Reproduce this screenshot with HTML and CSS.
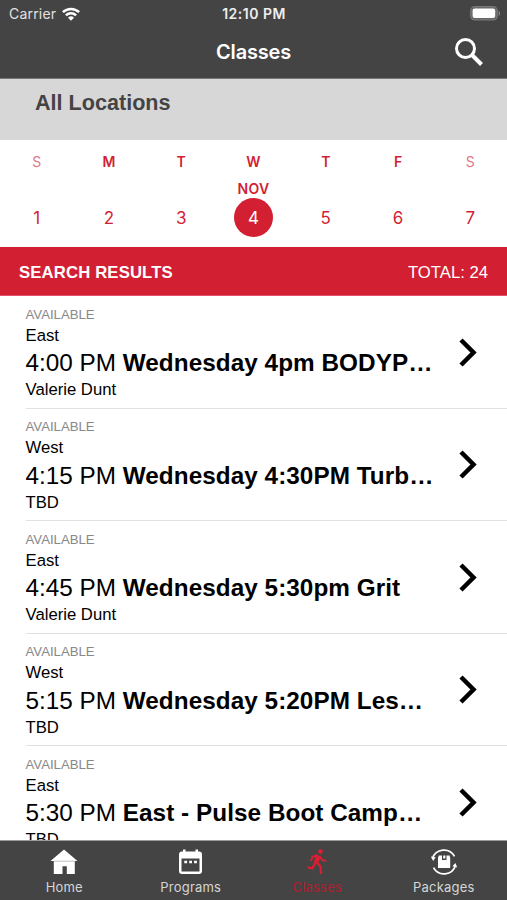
FILE: index.html
```html
<!DOCTYPE html>
<html lang="en">
<head>
  <meta charset="UTF-8" />
  <meta name="viewport" content="width=device-width, initial-scale=1.0"/>
  <title>Classes</title>
  <link rel="stylesheet" href="styles.css">
</head>
<body>

  <div class="app">
    <header class="header">
      <div class="status-bar">
        <div class="carrier">
          <span>Carrier</span>
          <svg class="wifi" viewBox="0 0 18 14" fill="none" stroke="#fff" stroke-width="2.5">
            <path d="M0.9 5.2a11.6 11.6 0 0 1 16.2 0"/>
            <path d="M3.9 8.4a7.3 7.3 0 0 1 10.2 0"/>
            <path d="M9 13.8L6 10.8a4.3 4.3 0 0 1 6 0z" fill="#fff" stroke="none"/>
          </svg>
        </div>
        <span class="clock">12:10 PM</span>
        <svg class="battery" viewBox="0 0 31 15">
          <rect x="0.7" y="0.7" width="26.6" height="13.2" rx="4" fill="#666" stroke="#777" stroke-width="1.2"/>
          <rect x="2.6" y="2.6" width="22.6" height="9.4" rx="2" fill="#fff"/>
          <path d="M28.7 5v4.800c1.800-.6 1.800-4.200 0-4.800z" fill="#8b8b8b"/>
        </svg>
      </div>
      <div class="title-bar">
        <h1>Classes</h1>
        <svg class="search" viewBox="0 0 28 28" fill="none" stroke="#fff">
          <circle cx="10.500" cy="10.500" r="9" stroke-width="3"/>
          <path d="M17 17l9.500 9.500" stroke-width="4"/>
        </svg>
      </div>
    </header>

    <div class="location">All Locations</div>

    <!-- Week picker -->
    <div class="week">
      <div class="day weekend"><span class="name">S</span><span class="month"></span><span class="date">1</span></div>
      <div class="day"><span class="name">M</span><span class="month"></span><span class="date">2</span></div>
      <div class="day"><span class="name">T</span><span class="month"></span><span class="date">3</span></div>
      <div class="day selected"><span class="name">W</span><span class="month">NOV</span><span class="date">4</span></div>
      <div class="day"><span class="name">T</span><span class="month"></span><span class="date">5</span></div>
      <div class="day"><span class="name">F</span><span class="month"></span><span class="date">6</span></div>
      <div class="day weekend"><span class="name">S</span><span class="month"></span><span class="date">7</span></div>
    </div>

    <div class="results-bar">
      <span class="results-title">SEARCH RESULTS</span>
      <span>TOTAL: 24</span>
    </div>

    <div class="class-list">
      <div class="class-row">
        <div class="class-info">
          <p class="status">AVAILABLE</p>
          <p class="place">East</p>
          <p class="time">4:00 PM <b>Wednesday 4pm BODYP…</b></p>
          <p class="teacher">Valerie Dunt</p>
        </div>
        <svg class="chevron" viewBox="0 0 18 30"><path d="M2 2l12.500 12.500L2 27"/></svg>
      </div>
      <div class="class-row">
        <div class="class-info">
          <p class="status">AVAILABLE</p>
          <p class="place">West</p>
          <p class="time">4:15 PM <b>Wednesday 4:30PM Turb…</b></p>
          <p class="teacher">TBD</p>
        </div>
        <svg class="chevron" viewBox="0 0 18 30"><path d="M2 2l12.500 12.500L2 27"/></svg>
      </div>
      <div class="class-row">
        <div class="class-info">
          <p class="status">AVAILABLE</p>
          <p class="place">East</p>
          <p class="time">4:45 PM <b>Wednesday 5:30pm Grit</b></p>
          <p class="teacher">Valerie Dunt</p>
        </div>
        <svg class="chevron" viewBox="0 0 18 30"><path d="M2 2l12.500 12.500L2 27"/></svg>
      </div>
      <div class="class-row">
        <div class="class-info">
          <p class="status">AVAILABLE</p>
          <p class="place">West</p>
          <p class="time">5:15 PM <b>Wednesday 5:20PM Les…</b></p>
          <p class="teacher">TBD</p>
        </div>
        <svg class="chevron" viewBox="0 0 18 30"><path d="M2 2l12.500 12.500L2 27"/></svg>
      </div>
      <div class="class-row">
        <div class="class-info">
          <p class="status">AVAILABLE</p>
          <p class="place">East</p>
          <p class="time">5:30 PM <b>East - Pulse Boot Camp…</b></p>
          <p class="teacher">TBD</p>
        </div>
        <svg class="chevron" viewBox="0 0 18 30"><path d="M2 2l12.500 12.500L2 27"/></svg>
      </div>
    </div>

    <nav class="tab-bar">
      <div class="tab">
        <svg viewBox="0 0 28 28" fill="#fff">
          <path d="M14 1.500L27.500 13H24.800V26H16.800V18.200H12.500V26H3.800V13H0.500z"/>
          <path d="M3.800 13.200H24.800" stroke="#999" stroke-width="0.600"/>
        </svg>
        <span>Home</span>
      </div>
      <div class="tab">
        <svg viewBox="0 0 28 28">
          <path d="M5 3.500H6V1.500H8.500V3.500H18.500V1.500H21V3.500H22A3 3 0 0 1 25 6.500V23A3 3 0 0 1 22 26H5A3 3 0 0 1 2 23V6.500A3 3 0 0 1 5 3.500z" fill="#fff"/>
          <rect x="4.500" y="10.500" width="18" height="13" fill="#444"/>
          <path d="M7.300 14h2.800M12.200 14h2.800M17.100 14h2.800" stroke="#fff" stroke-width="2.600"/>
        </svg>
        <span>Programs</span>
      </div>
      <div class="tab active">
        <svg viewBox="0 0 28 28" fill="none" stroke="#dc1e32" stroke-linejoin="round">
          <circle cx="17.500" cy="3.600" r="2.300" fill="#dc1e32" stroke="none"/>
          <path d="M15.300 7.500L13 15" stroke-width="4.600"/>
          <path d="M14.500 7L9.300 9L8 13M16.500 8L19.300 12.300L23.300 12.800" stroke-width="2"/>
          <path d="M13.500 14.500L17.500 18.300L18 26M12 15L9.500 20.300L4.500 19.300" stroke-width="2.300"/>
        </svg>
        <span>Classes</span>
      </div>
      <div class="tab">
        <svg viewBox="0 0 28 28" fill="none" stroke="#fff" stroke-width="1.700">
          <path d="M2.500 10.500A12 12 0 0 1 24.500 8.300M25.500 17.500A12 12 0 0 1 3.500 19.700"/>
          <path d="M0.800 8.500L5.600 9.200L3.200 13zM27.200 19.500L22.400 18.200L25.400 15z" fill="#fff" stroke="none"/>
          <path d="M8.800 7.500H12v4.500h4.500V7.500H19.500l.7 2.500V20H8V10z" fill="#fff" stroke="none"/>
          <path d="M13.200 7.500h2.200v3h-2.200z" fill="#fff" stroke="none"/>
        </svg>
        <span>Packages</span>
      </div>
    </nav>
  </div>

</body>
</html>
```
FILE: styles.css
```css
* {
  margin: 0;
  padding: 0;
  box-sizing: border-box;
}

body {
  font-family: "Liberation Sans", Arial, sans-serif;
  background-color: #fff;
  color: #000;
}

.app {
  display: flex;
  flex-direction: column;
  height: 900px;
  overflow: hidden;
}

.header {
  height: 79px;
  flex: none;
  background-color: #444;
  border-bottom: 1px solid #777;
  color: #fff;
  font-family: Inter, sans-serif;
}

.status-bar {
  display: grid;
  grid-template-columns: 1fr auto 1fr;
  align-items: center;
  height: 27px;
  padding: 0 6px 0 9px;
}

.carrier {
  display: flex;
  align-items: center;
  gap: 6px;
  font-size: 14px;
  letter-spacing: 0.2px;
  color: #e2e2e2;
}

.wifi {
  width: 18px;
  height: 14px;
}

.clock {
  font-size: 14px;
  font-weight: 600;
  letter-spacing: 0.5px;
  margin-right: 2px;
  color: #eee;
}

.battery {
  width: 31px;
  height: 15px;
  justify-self: end;
}

.title-bar {
  display: grid;
  grid-template-columns: 1fr auto 1fr;
  align-items: center;
  height: 50px;
  padding: 0 24px;
}

.title-bar h1 {
  grid-column: 2;
  font-size: 20px;
  font-weight: 600;
  letter-spacing: -0.2px;
}

.search {
  width: 28px;
  height: 28px;
  justify-self: end;
}

.location {
  height: 61px;
  flex: none;
  padding: 12px 35px;
  background-color: #d7d7d7;
  color: #444;
  font-size: 21.6px;
  font-weight: bold;
  line-height: 23px;
}

.week {
  display: grid;
  grid-template-columns: repeat(7, 1fr);
  height: 107px;
  flex: none;
  padding: 12px 0.5px 0;
  font-family: Inter, sans-serif;
  color: #d31f35;
}

.day {
  display: flex;
  flex-direction: column;
  align-items: center;
}

.name {
  height: 20px;
  font-size: 14px;
  line-height: 20px;
  font-weight: 600;
}

.weekend .name {
  font-weight: 400;
  color: #e0788a;
}

.month {
  height: 18px;
  margin-top: 8px;
  font-size: 14px;
  font-weight: 600;
  line-height: 18px;
  letter-spacing: 0.3px;
}

.date {
  width: 39px;
  height: 39px;
  border-radius: 50%;
  font-size: 17px;
  line-height: 41px;
  text-align: center;
}

.selected .date {
  background-color: #d31f32;
  color: #fff;
}

.results-bar {
  display: flex;
  justify-content: space-between;
  align-items: center;
  height: 49px;
  flex: none;
  padding: 3px 19px 0;
  background-color: #d31f32;
  border-bottom: 1px solid #e0506a;
  color: #fff;
  font-size: 16.7px;
}

.results-title {
  font-weight: bold;
  letter-spacing: 0.15px;
}

.class-list {
  flex: 1;
  min-height: 0;
  overflow: hidden;
}

.class-row {
  display: flex;
  justify-content: space-between;
  height: 112.4px;
  margin-left: 25.5px;
  padding-top: 9.6px;
  border-bottom: 1px solid #e2e2e2;
}

.class-row:first-child {
  height: 112.8px;
}

.class-info {
  white-space: nowrap;
}

.status {
  font-size: 13.2px;
  line-height: 18px;
  color: #888;
}

.place {
  font-size: 16.7px;
  line-height: 23.6px;
}

.time {
  font-size: 24.3px;
  line-height: 31px;
}

.time b {
  letter-spacing: 0.05px;
}

.teacher {
  font-size: 16.7px;
  line-height: 23px;
}

.chevron {
  width: 18px;
  height: 30px;
  margin: 32px 30.5px 0 0;
  fill: none;
  stroke: #000;
  stroke-width: 4.5;
}

.tab-bar {
  display: grid;
  grid-template-columns: repeat(4, 1fr);
  height: 60px;
  flex: none;
  padding: 7px 0 0 1px;
  background-color: #444;
  border-top: 1px solid #999;
  color: #d5d5d5;
  font-family: Inter, sans-serif;
  font-size: 13px;
  letter-spacing: 0.2px;
}

.tab {
  display: flex;
  flex-direction: column;
  align-items: center;
}

.tab svg {
  width: 28px;
  height: 28px;
}

.tab span {
  line-height: 22px;
}

.tab.active {
  color: #b01f30;
}
```
